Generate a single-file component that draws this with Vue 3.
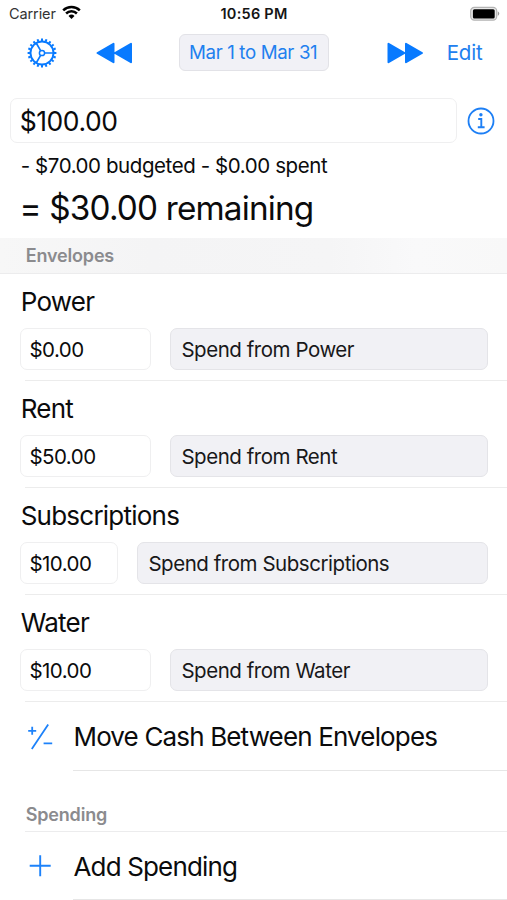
<script setup>
const envelopes = [
  { name: 'Power', amount: '$0.00' },
  { name: 'Rent', amount: '$50.00' },
  { name: 'Subscriptions', amount: '$10.00', compact: true },
  { name: 'Water', amount: '$10.00' },
]
const teeth = Array.from({ length: 20 }, (_, i) => i * 18)
</script>

<template>
  <div class="screen">
    <header class="status">
      <div class="carrier">
        <span>Carrier</span>
        <svg width="19" height="15" viewBox="0 0 19 15" fill="none" stroke="#000" stroke-width="2.5">
          <path d="M1.2 5.4a11.8 11.8 0 0 1 16.6 0" />
          <path d="M4.1 8.5a7.6 7.6 0 0 1 10.8 0" />
          <path d="M6.5 11 9.5 14l3-3a4.3 4.3 0 0 0-6 0z" fill="#000" stroke="none" />
        </svg>
      </div>
      <span class="clock">10:56 PM</span>
      <svg class="battery" width="32" height="16" viewBox="0 0 32 16">
        <rect x="1.7" y="1.4" width="26" height="12.8" rx="3.6" fill="#e8e8e8" stroke="#b4b4b4" stroke-width="1.2" />
        <rect x="3.9" y="3.2" width="21.8" height="9.2" rx="1.5" fill="#000" />
        <path d="M28.8 5.3q3 2.3 0 4.6z" fill="#999" />
      </svg>
    </header>

    <nav class="toolbar">
      <svg class="gear" width="30" height="30" viewBox="-15 -15 30 30" fill="none" stroke="#087aff">
        <circle r="11.5" stroke-width="1.9" />
        <path v-for="a in teeth" :key="a" d="M0-12v-2.4" stroke-width="2" :transform="`rotate(${a})`" />
        <circle r="2.6" stroke-width="1.5" />
        <path d="M2.8 0H11.5M-1.4-2.4-5.8-10M-1.4 2.4-5.8 10" stroke-width="1.7" />
      </svg>
      <svg class="rewind" width="37" height="22" viewBox="0 0 37 22" fill="#087aff" stroke="#087aff" stroke-width="2" stroke-linejoin="round">
        <path d="M1.5 11 17.5 1.8v18.4zM19 11 35 1.8v18.4z" />
      </svg>
      <button class="period"><span>Mar 1 to Mar 31</span></button>
      <svg class="forward" width="37" height="22" viewBox="0 0 37 22" fill="#087aff" stroke="#087aff" stroke-width="2" stroke-linejoin="round">
        <path d="M35 11 19 1.8v18.4zM17.5 11 1.5 1.8v18.4z" />
      </svg>
      <span class="edit">Edit</span>
    </nav>

    <section class="summary">
      <div class="income">
        <div class="field total"><span>$100.00</span></div>
        <svg width="28" height="28" viewBox="0 0 28 28" fill="none" stroke="#1d7ff5">
          <circle cx="14" cy="14" r="12.5" stroke-width="1.8" />
          <circle cx="13.9" cy="7.8" r="1.7" fill="#1d7ff5" stroke="none" />
          <path d="M11.2 12h3.1v8.2M10.8 20.3h6.8" stroke-width="1.9" />
        </svg>
      </div>
      <p class="spent"><span>- $70.00 budgeted - $0.00 spent</span></p>
      <p class="remaining"><span>= $30.00 remaining</span></p>
    </section>

    <h2 class="section first"><span>Envelopes</span></h2>
    <article v-for="e in envelopes" :key="e.name" class="envelope">
      <h3><span>{{ e.name }}</span></h3>
      <div class="controls">
        <div class="field amount" :class="{ compact: e.compact }"><span>{{ e.amount }}</span></div>
        <button class="spend"><span>Spend from {{ e.name }}</span></button>
      </div>
    </article>
    <div class="action">
      <svg width="28" height="28" viewBox="0 0 28 28" fill="none" stroke="#1d82fa" stroke-width="1.8">
        <path d="M2.2 7.8h8M6.2 3.8v8M5.8 26.1 22.2 1.6M17.6 20.4h8.6" />
      </svg>
      <div class="label move"><span>Move Cash Between Envelopes</span></div>
    </div>
    <h2 class="section second"><span>Spending</span></h2>
    <div class="action add">
      <svg width="28" height="28" viewBox="0 0 28 28" fill="none" stroke="#1d82fa" stroke-width="1.9">
        <path d="M3.7 13.8h21M14.2 3.3v21" />
      </svg>
      <div class="label"><span>Add Spending</span></div>
    </div>
  </div>
</template>

<style>
body { margin: 0; background: #fff; overflow: hidden; }
</style>

<style scoped>
.screen {
  box-sizing: border-box;
  width: 507px;
  height: 900px;
  overflow: hidden;
  background: #fff;
  color: #0b0b0c;
  font-family: Inter, sans-serif;
  white-space: nowrap;
}
h2, h3, p { margin: 0; font-weight: 400; }
button { border: 0; font: inherit; color: inherit; text-align: left; padding: 0; }
svg { flex: none; display: block; }
.status {
  display: grid;
  grid-template-columns: 1fr auto 1fr;
  align-items: center;
  height: 28px;
  padding: 0 6px 0 9px;
  font-size: 14.5px;
}
.carrier { display: flex; align-items: center; gap: 6px; margin-top: -1px; color: #333; letter-spacing: -0.1px; }
.carrier svg { margin-top: -2px; }
.clock { margin: -1px 2px 0 0; font-weight: 600; font-size: 14.5px; letter-spacing: 0.25px; color: #151515; }
.battery { justify-self: end; margin-top: -1px; }
.toolbar { display: flex; align-items: center; height: 49px; padding-left: 27px; color: #2180ef; }
.rewind { margin-left: 39px; }
.period {
  box-sizing: border-box;
  width: 150px;
  height: 37px;
  margin-left: 46px;
  padding-left: 9px;
  border: 1px solid #e2e2e7;
  border-radius: 6px;
  background: #f1f1f6;
  font-size: 18.7px;
  letter-spacing: -0.36px;
}
.forward { margin-left: 58px; }
.edit { margin-left: 22.7px; font-size: 20.5px; letter-spacing: -0.2px; }
.summary { box-sizing: border-box; height: 161px; padding-top: 21px; }
.income { display: flex; align-items: center; padding-left: 10px; gap: 10px; }
.field {
  box-sizing: border-box;
  display: flex;
  align-items: center;
  border: 1.5px solid #efeff0;
  border-radius: 7px;
  background: #fff;
}
.total { width: 447px; height: 45px; padding-left: 8.7px; font-size: 26.5px; letter-spacing: -0.45px; }
.spent { height: 44px; line-height: 45px; padding-left: 20.7px; font-size: 20.5px; letter-spacing: -0.42px; }
.remaining { height: 42px; line-height: 42px; padding-left: 19.6px; font-size: 33.3px; letter-spacing: -0.83px; }
.section {
  box-sizing: border-box;
  margin-left: 25px;
  border-bottom: 1.5px solid #ececed;
  color: #8b8b8e;
  font-size: 18px;
  font-weight: 600;
  letter-spacing: -0.17px;
}
.section span { padding-left: 0.7px; }
.first {
  height: 36px;
  margin-left: 0;
  padding-left: 25px;
  line-height: 35px;
  background: linear-gradient(90deg, #f7f7f7, #f4f4f5 30%, #f5f5f6 65%, #f9f9fa 82%, #f8f8f8);
}
.second { height: 61px; padding-top: 28px; line-height: 32px; }
.envelope { height: 107px; position: relative; }
.envelope::after {
  content: '';
  position: absolute;
  left: 25px;
  right: 0;
  bottom: 0;
  height: 1.5px;
  background: #ececec;
}
h3 { height: 54px; line-height: 55px; padding-left: 20.7px; font-size: 26px; letter-spacing: -0.77px; }
.controls { display: flex; gap: 19px; padding: 0 19px 0 20px; }
.amount { width: 131px; height: 42px; padding-left: 8.4px; font-size: 20.5px; letter-spacing: -0.52px; }
.compact { width: 98px; }
.spend {
  flex: 1;
  height: 42px;
  padding-left: 10.4px;
  border: 1.5px solid #e4e4e8;
  border-radius: 7px;
  background: #f1f1f5;
  font-size: 20.5px;
  letter-spacing: -0.46px;
  color: #18181a;
}
.action { display: flex; align-items: center; height: 69px; padding-left: 26px; }
.label {
  box-sizing: border-box;
  flex: 1;
  height: 69px;
  line-height: 70px;
  margin-left: 19px;
  padding-left: 0.5px;
  border-bottom: 1px solid #e6e6e6;
  font-size: 26px;
  letter-spacing: -0.85px;
}
.add, .add .label { height: 68px; }
</style>
